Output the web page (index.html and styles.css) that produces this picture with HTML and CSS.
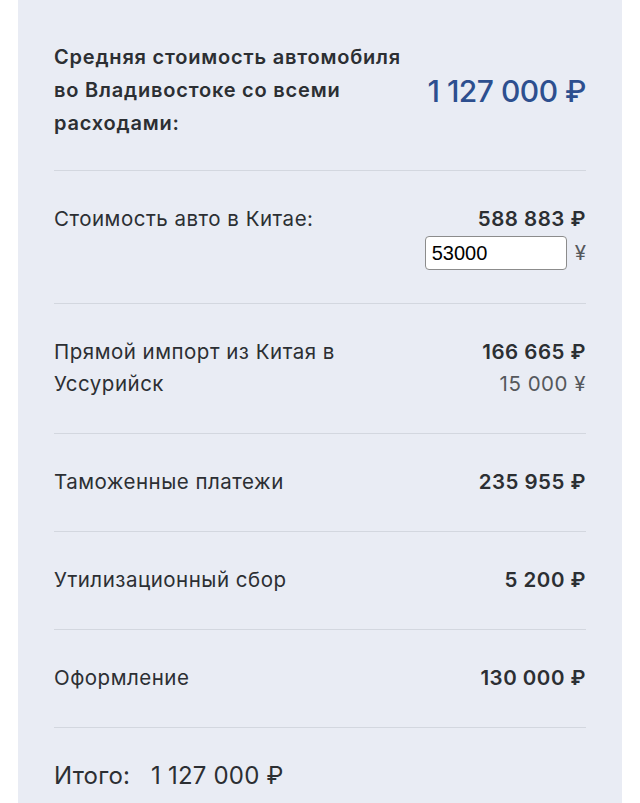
FILE: index.html
```html
<!DOCTYPE html>
<html lang="ru">
<head>
    <meta charset="UTF-8">
    <meta name="viewport" content="width=device-width, initial-scale=1.0">
    <title>Расчёт стоимости</title>
    <link rel="stylesheet" href="styles.css">
</head>
<body>
    <div class="panel">
        <div class="summary">
            <div class="summary-title">Средняя стоимость автомобиля во Владивостоке со всеми расходами:</div>
            <div class="summary-price">1 127 000 ₽</div>
        </div>

        <div class="row">
            <div class="label">Стоимость авто в Китае:</div>
            <div class="values">
                <div class="rub">588 883 ₽</div>
                <div class="yuan-input">
                    <input type="text" value="53000">
                    <span>¥</span>
                </div>
            </div>
        </div>

        <div class="row">
            <div class="label">Прямой импорт из Китая в Уссурийск</div>
            <div class="values">
                <div class="rub">166 665 ₽</div>
                <div class="yuan">15 000 ¥</div>
            </div>
        </div>

        <div class="row">
            <div class="label">Таможенные платежи</div>
            <div class="values"><div class="rub">235 955 ₽</div></div>
        </div>

        <div class="row">
            <div class="label">Утилизационный сбор</div>
            <div class="values"><div class="rub">5 200 ₽</div></div>
        </div>

        <div class="row">
            <div class="label">Оформление</div>
            <div class="values"><div class="rub">130 000 ₽</div></div>
        </div>

        <div class="total">Итого:&nbsp;&nbsp; 1 127 000 ₽</div>
    </div>
</body>
</html>
```

FILE: styles.css
```css
body {
    font-family: Inter, "Noto Sans", sans-serif;
    background-color: #ffffff;
    margin: 0;
    color: #2c2f33;
}
.panel {
    background: #e9ecf4;
    width: 604px;
    margin-left: 18px;
    padding: 0 36px;
    box-sizing: border-box;
    height: 803px;
    overflow: hidden;
}
.summary {
    display: flex;
    justify-content: space-between;
    align-items: center;
    padding: 41px 0 30px;
    border-bottom: 1px solid #d3d7df;
}
.summary-title {
    font-size: 20px;
    font-weight: 600;
    line-height: 33px;
    letter-spacing: 0.8px;
    width: 365px;
}
.summary-price {
    font-size: 30px;
    font-weight: 500;
    color: #2d4f8f;
    letter-spacing: -0.5px;
}
.row {
    display: flex;
    justify-content: space-between;
    padding: 32px 0 33px;
    border-bottom: 1px solid #d3d7df;
    font-size: 20.5px;
    letter-spacing: 0.5px;
    line-height: 32px;
}
.label {
    width: 300px;
}
.values {
    display: flex;
    flex-direction: column;
    align-items: flex-end;
}
.rub {
    font-weight: 600;
}
.yuan {
    color: #55585c;
}
.yuan-input {
    display: flex;
    align-items: center;
    gap: 8px;
    margin-top: 1px;
}
.yuan-input input {
    width: 142px;
    height: 34px;
    box-sizing: border-box;
    border: 1px solid #8c8c8c;
    border-radius: 4px;
    padding: 0 6px;
    font-family: "Liberation Sans", Arial, sans-serif;
    font-size: 20px;
    letter-spacing: 0;
    color: #000;
}
.yuan-input span {
    color: #55585c;
    letter-spacing: 0;
}
.total {
    padding-top: 32px;
    font-size: 24px;
    letter-spacing: 0.2px;
    line-height: 32px;
}
```
